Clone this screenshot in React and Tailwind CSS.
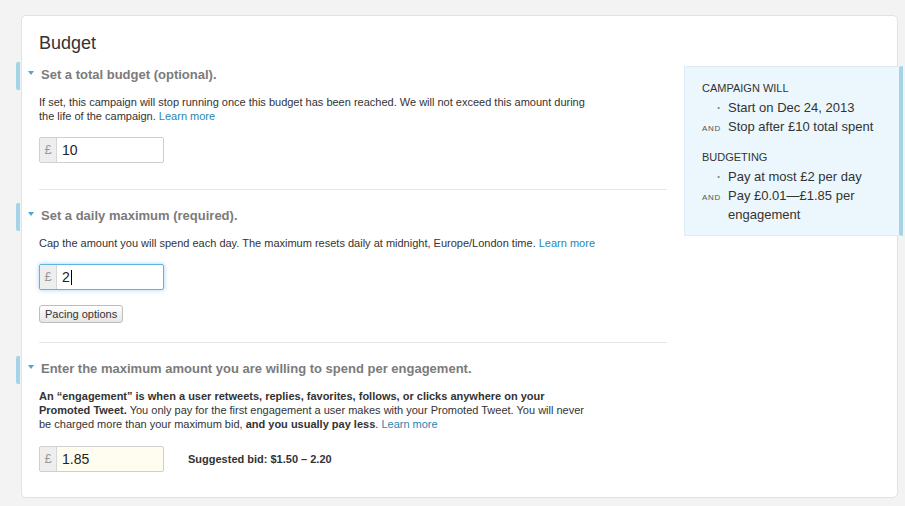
function Caret() {
  return <span className="ml-[1px] inline-block h-[15px] w-[1px] bg-black align-middle" />;
}

function MoneyInput({ value, focused, tinted, caret }) {
  return (
    <div
      className={`flex h-[26px] w-[125px] overflow-hidden rounded-[2px] border ${
        focused
          ? "border-[#62b3e2] shadow-[0_0_4px_rgba(82,168,236,0.55)]"
          : "border-[#cfcfcf]"
      } ${tinted ? "bg-[#fffdf0]" : "bg-white"}`}
    >
      <div className="flex w-[17px] shrink-0 items-center justify-center border-r border-[#d6d6d6] bg-[#eeeeee] text-[13px] text-[#9a9a9a]">
        £
      </div>
      <div className="flex items-center pl-[5px] text-[14px] text-[#222]">
        {value}
        {caret && <Caret />}
      </div>
    </div>
  );
}

function Section({ title, children }) {
  return (
    <section className="relative pt-[4px]">
      {/* blue marker sticking out of the card */}
      <div className="absolute -left-[23px] top-0 h-[28px] w-[4px] rounded-l-[2px] bg-[#a3d4e7]" />
      <div className="absolute -left-[11px] top-[9px] h-0 w-0 border-x-[3px] border-t-[4px] border-x-transparent border-t-[#4ea8cc]" />
      <h3 className="pl-[2px] text-[13px] font-bold leading-[18px] text-[#7b7b7b]">{title}</h3>
      {children}
    </section>
  );
}

function Learn() {
  return <a className="text-[#2a86b3]">Learn more</a>;
}

function SummaryRow({ lead, children }) {
  return (
    <div className="flex text-[13px] leading-[19px] text-[#333]">
      <span className="w-[26px] shrink-0 pr-[7px] text-right">
        {lead === "and" ? (
          <span className="text-[8px] tracking-[0.7px] text-[#555]">AND</span>
        ) : (
          <span className="font-bold text-[#8a8a8a]">·</span>
        )}
      </span>
      <span>{children}</span>
    </div>
  );
}

export default function App() {
  return (
    <div className="min-h-[506px] bg-[#f3f3f3] pl-[21px] pt-[15px] font-['Liberation_Sans',Arial,sans-serif]">
      <div className="w-[877px] rounded-[5px] border border-[#e2e2e2] bg-white pb-[25px] pl-[17px] pt-[16px]">
        <h2 className="text-[18px] leading-[22px] text-[#333]">Budget</h2>

        <div className="mt-[8px] flex">
          {/* Left column */}
          <div className="w-[628px] shrink-0">
            <Section title="Set a total budget (optional).">
              <p className="mt-[11px] max-w-[556px] text-[11px] leading-[14px] text-[#333]">
                If set, this campaign will stop running once this budget has been reached. We will not
                exceed this amount during the life of the campaign. <Learn />
              </p>
              <div className="mt-[14px]">
                <MoneyInput value="10" />
              </div>
            </Section>

            <div className="mt-[26px] h-px bg-[#e6e6e6]" />

            <div className="mt-[13px]">
              <Section title="Set a daily maximum (required).">
                <p className="mt-[11px] text-[11px] leading-[14px] text-[#333]">
                  Cap the amount you will spend each day. The maximum resets daily at midnight,
                  Europe/London time. <Learn />
                </p>
                <div className="mt-[14px]">
                  <MoneyInput value="2" focused caret />
                </div>
                <button className="mt-[15px] h-[18px] rounded-[3px] border border-[#bdbdbd] bg-gradient-to-b from-white to-[#e6e6e6] px-[5px] text-[11px] leading-[16px] text-[#333]">
                  Pacing options
                </button>
              </Section>
            </div>

            <div className="mt-[17px] h-px bg-[#e6e6e6]" />

            <div className="mt-[13px]">
              <Section title="Enter the maximum amount you are willing to spend per engagement.">
                <p className="mt-[11px] max-w-[556px] text-[11px] leading-[14px] text-[#333]">
                  <b>
                    An “engagement” is when a user retweets, replies, favorites, follows, or clicks
                    anywhere on your Promoted Tweet.
                  </b>{" "}
                  You only pay for the first engagement a user makes with your Promoted Tweet. You
                  will never be charged more than your maximum bid, <b>and you usually pay less</b>.{" "}
                  <Learn />
                </p>
                <div className="mt-[15px] flex items-center">
                  <MoneyInput value="1.85" tinted />
                  <span className="ml-[24px] text-[11px] font-bold text-[#333]">
                    Suggested bid: $1.50 – 2.20
                  </span>
                </div>
              </Section>
            </div>
          </div>

          {/* Summary box */}
          <aside className="ml-[17px] mt-[4px] h-[170px] w-[219px] shrink-0 border border-r-4 border-[#dcedf5] border-r-[#a6d3e6] bg-[#ebf7fc] pl-[17px] pt-[14px]">
            <div className="text-[11px] leading-[14px] text-[#333]">CAMPAIGN WILL</div>
            <div className="mt-[3px]">
              <SummaryRow>Start on Dec 24, 2013</SummaryRow>
              <SummaryRow lead="and">Stop after £10 total spent</SummaryRow>
            </div>
            <div className="mt-[12px] text-[11px] leading-[14px] text-[#333]">BUDGETING</div>
            <div className="mt-[3px]">
              <SummaryRow>Pay at most £2 per day</SummaryRow>
              <SummaryRow lead="and">Pay £0.01—£1.85 per engagement</SummaryRow>
            </div>
          </aside>
        </div>
      </div>
    </div>
  );
}
